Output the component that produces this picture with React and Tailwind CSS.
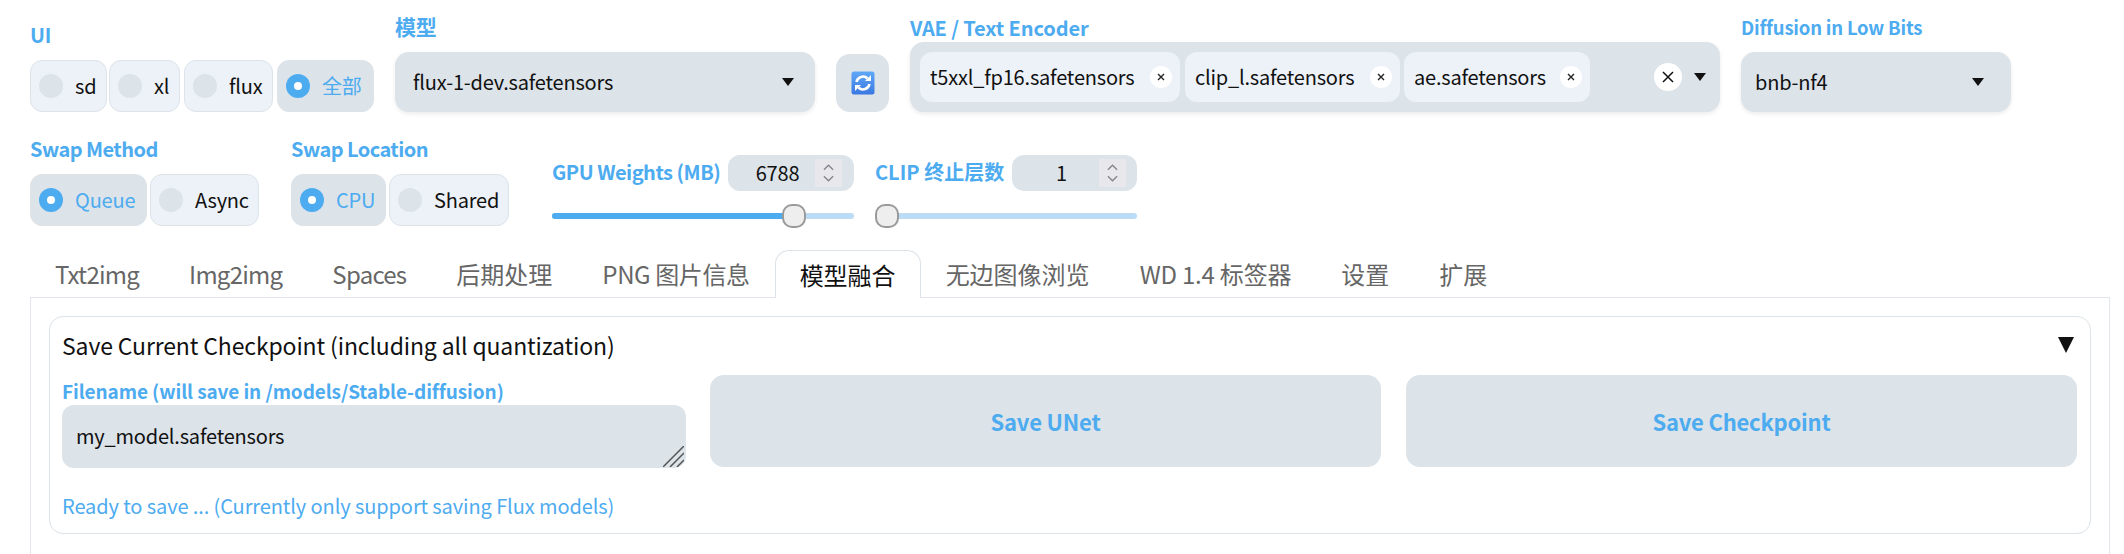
import React from 'react';

const font = "font-['Noto_Sans_CJK_SC','Noto_Sans',sans-serif]";

function Label({ children, className = '' }) {
  return <div className={`leading-[28px] font-semibold text-[#4dabf0] whitespace-nowrap ${className}`}>{children}</div>;
}

function Radio({ label, checked, className = '' }) {
  return (
    <div className={`h-full flex items-center gap-[12px] px-[8px] rounded-[12px] border ${checked ? 'bg-[#dce3e9] border-[#dce3e9] text-[#4dabf0]' : 'bg-[#edf2f8] border-[#dce3e9] text-[#111]'} ${className}`}>
      {checked ? (
        <span className="w-[24px] h-[24px] rounded-full bg-[#4dabf0] flex items-center justify-center shrink-0">
          <span className="w-[8px] h-[8px] rounded-full bg-white" />
        </span>
      ) : (
        <span className="w-[24px] h-[24px] rounded-full bg-[#dce3e9] shrink-0" />
      )}
      <span className="text-[20px] leading-none whitespace-nowrap">{label}</span>
    </div>
  );
}

function Arrow({ className = '' }) {
  return (
    <svg viewBox="0 0 12 8" className={`w-[12px] h-[8px] fill-[#111] ${className}`}>
      <path d="M0 0h12L6 8z" />
    </svg>
  );
}

function Select({ value, className = '' }) {
  return (
    <div className={`h-[60px] flex items-center justify-between rounded-[14px] bg-[#dce3e9] shadow-[0_2px_4px_rgba(0,0,0,0.08)] text-[20px] text-[#111] ${className}`}>
      <span>{value}</span>
      <Arrow />
    </div>
  );
}

function Chip({ label, className = '' }) {
  return (
    <div className={`h-[50px] flex items-center justify-between rounded-[12px] bg-[#edf2f8] pl-[10px] pr-[8px] text-[20px] text-[#111] ${className}`}>
      <span>{label}</span>
      <span className="w-[22px] h-[22px] rounded-full bg-white flex items-center justify-center">
        <svg viewBox="0 0 10 10" className="w-[10px] h-[10px] stroke-[#222] stroke-[1.4]"><path d="M2 2l6 6M8 2l-6 6" /></svg>
      </span>
    </div>
  );
}

function NumberBox({ value, className = '' }) {
  return (
    <div className={`h-[36px] rounded-[12px] bg-[#dce3e9] flex items-center pl-[12px] ${className}`}>
      <span className="w-[75px] text-center text-[20px] text-[#111]">{value}</span>
      <span className="w-[27px] h-[28px] bg-[#e8e8ec] flex flex-col items-center justify-center gap-[4px]">
        <svg viewBox="0 0 12 7" className="w-[11px] h-[7px] fill-none stroke-[#85858f] stroke-[1.5]"><path d="M1 6l5-5 5 5" /></svg>
        <svg viewBox="0 0 12 7" className="w-[11px] h-[7px] fill-none stroke-[#85858f] stroke-[1.5]"><path d="M1 1l5 5 5-5" /></svg>
      </span>
    </div>
  );
}

function Slider({ percent }) {
  const left = `calc((100% - 24px) * ${percent / 100})`;
  return (
    <div className="relative h-[24px] flex items-center">
      <div className="w-full h-[6px] rounded-full bg-[#bcdcf6] overflow-hidden">
        <div className="h-full bg-[#4dabf0]" style={{ width: `calc((100% - 24px) * ${percent / 100} + 12px)` }} />
      </div>
      <span className="absolute top-0 w-[24px] h-[24px] rounded-[10px] bg-[#eeeeee] border-2 border-[#9a9a9a]" style={{ left }} />
    </div>
  );
}

function Tab({ label, spacing, active }) {
  if (active) {
    return (
      <div className={`h-[48px] mb-[-1px] px-[24px] flex items-center text-[24px] text-[#111] bg-white border border-b-0 border-[#dce3e9] rounded-t-[14px] relative z-10 ${spacing}`}>
        {label}
      </div>
    );
  }
  return <div className={`h-[47px] px-[25px] flex items-center text-[24px] text-[#666] ${spacing}`}>{label}</div>;
}

const tabs = [
  { label: 'Txt2img', spacing: 'tracking-[-0.75px]' },
  { label: 'Img2img', spacing: 'tracking-[-0.75px]' },
  { label: 'Spaces', spacing: 'tracking-[-0.75px]' },
  { label: '后期处理', spacing: 'tracking-normal' },
  { label: 'PNG 图片信息', spacing: 'tracking-[-0.4px]' },
  { label: '模型融合', spacing: 'tracking-normal', active: true },
  { label: '无边图像浏览', spacing: 'tracking-normal' },
  { label: 'WD 1.4 标签器', spacing: 'tracking-[-0.2px]' },
  { label: '设置', spacing: 'tracking-normal' },
  { label: '扩展', spacing: 'tracking-normal' },
];

export default function App() {
  return (
    <div className={`w-[2124px] h-[554px] overflow-hidden bg-white tracking-[-0.2px] ${font}`}>
      <div className="flex items-end pl-[30px] pt-[12px]">
        <div className="w-[344px]">
          <Label className="mb-[11px] text-[20px]">UI</Label>
          <div className="flex gap-[2px] h-[52px]">
            <Radio label="sd" className="w-[77px]" />
            <Radio label="xl" className="w-[71px]" />
            <Radio label="flux" className="w-[89px] ml-[2px]" />
            <Radio label="全部" checked className="w-[97px] ml-[2px]" />
          </div>
        </div>
        <div className="w-[420px] ml-[21px]">
          <Label className="mb-[12px] text-[21px]">模型</Label>
          <Select value="flux-1-dev.safetensors" className="pl-[18px] pr-[21px]" />
        </div>
        <div className="w-[53px] h-[58px] ml-[21px] rounded-[14px] bg-[#dce3e9] flex items-center justify-center">
          <svg viewBox="0 0 24 24" className="w-[24px] h-[24px]">
            <defs>
              <linearGradient id="refreshBg" x1="0" y1="0" x2="0" y2="1">
                <stop offset="0" stopColor="#5fa8f7" />
                <stop offset="1" stopColor="#3a78e2" />
              </linearGradient>
            </defs>
            <rect x="0.5" y="0.5" width="23" height="23" rx="2.5" fill="url(#refreshBg)" />
            <path d="M5.5 11a6.5 6.5 0 0 1 11-3.5" fill="none" stroke="#fff" strokeWidth="2.6" />
            <path d="M14 10h6V4z" fill="#fff" />
            <path d="M18.5 13a6.5 6.5 0 0 1-11 3.5" fill="none" stroke="#fff" strokeWidth="2.6" />
            <path d="M10 14H4v6z" fill="#fff" />
          </svg>
        </div>
        <div className="w-[810px] ml-[21px]">
          <Label className="text-[20px] tracking-[-0.1px]">VAE / Text Encoder</Label>
          <div className="h-[70px] rounded-[14px] bg-[#dce3e9] shadow-[0_2px_4px_rgba(0,0,0,0.08)] flex items-center pl-[10px] pr-[14px]">
            <Chip label="t5xxl_fp16.safetensors" className="w-[260px]" />
            <Chip label="clip_l.safetensors" className="w-[215px] ml-[5px]" />
            <Chip label="ae.safetensors" className="w-[186px] ml-[4px]" />
            <span className="ml-auto w-[28px] h-[28px] rounded-full bg-white flex items-center justify-center">
              <svg viewBox="0 0 14 14" className="w-[14px] h-[14px] stroke-[#111] stroke-[1.5]"><path d="M2 2l10 10M12 2L2 12" /></svg>
            </span>
            <Arrow className="ml-[12px]" />
          </div>
        </div>
        <div className="w-[270px] ml-[21px]">
          <Label className="mb-[11px] text-[18.5px]">Diffusion in Low Bits</Label>
          <Select value="bnb-nf4" className="pl-[14px] pr-[27px]" />
        </div>
      </div>

      <div className="flex items-start pl-[30px] mt-[23px]">
        <div className="w-[261px]">
          <Label className="mb-[11px] text-[20px] tracking-[-0.55px]">Swap Method</Label>
          <div className="flex gap-[2px] h-[52px]">
            <Radio label="Queue" checked className="w-[117px]" />
            <Radio label="Async" className="w-[109px] ml-[1px]" />
          </div>
        </div>
        <div className="w-[261px]">
          <Label className="mb-[11px] text-[20px] tracking-[-0.55px]">Swap Location</Label>
          <div className="flex gap-[2px] h-[52px]">
            <Radio label="CPU" checked className="w-[95px]" />
            <Radio label="Shared" className="w-[120px] ml-[1px]" />
          </div>
        </div>
        <div className="w-[302px] mt-[20px]">
          <div className="flex items-center justify-between">
            <Label className="text-[20px] tracking-[-0.5px] mb-[3px]">GPU Weights (MB)</Label>
            <NumberBox value="6788" className="w-[126px]" />
          </div>
          <div className="mt-[13px]"><Slider percent={82.7} /></div>
        </div>
        <div className="w-[262px] ml-[21px] mt-[20px]">
          <div className="flex items-center justify-between">
            <Label className="text-[20px] tracking-normal mb-[3px]">CLIP 终止层数</Label>
            <NumberBox value="1" className="w-[125px]" />
          </div>
          <div className="mt-[13px]"><Slider percent={0} /></div>
        </div>
      </div>

      <div className="flex items-end pl-[30px] mt-[22px]">
        {tabs.map((t) => (
          <Tab key={t.label} label={t.label} spacing={t.spacing} active={t.active} />
        ))}
      </div>

      <div className="ml-[30px] mr-[14px] h-[300px] border border-[#e3e7ec] pl-[18px] pr-[18px] pt-[18px]">
        <div className="h-[218px] rounded-[14px] border border-[#dce3e9] pl-[12px] pr-[11px]">
          <div className="flex items-center justify-between h-[58px] pb-[2px]">
            <span className="text-[23px] tracking-[-0.13px] text-[#111]">Save Current Checkpoint (including all quantization)</span>
            <svg viewBox="0 0 16 16" className="w-[16px] h-[16px] fill-[#111] mr-[5px]"><path d="M0 0h16L8 16z" /></svg>
          </div>
          <div className="flex gap-[24px]">
            <div className="w-[624px]">
              <Label className="text-[19px] leading-[27px] mt-[2px] tracking-[-0.1px]">Filename (will save in /models/Stable-diffusion)</Label>
              <div className="relative h-[63px] rounded-[12px] bg-[#dce3e9] flex items-center px-[14px] pb-[2px] text-[20px] text-[#111]">
                my_model.safetensors
                <svg viewBox="0 0 21 21" className="absolute right-[2px] bottom-[1px] w-[21px] h-[21px] stroke-[#555] stroke-[1.5]">
                  <path d="M0 21L21 0M7 21L21 7M14 21l7-7" />
                </svg>
              </div>
            </div>
            <div className="w-[671px] h-[92px] rounded-[14px] bg-[#dce3e9] flex items-center justify-center text-[22px] font-semibold text-[#4dabf0]">Save UNet</div>
            <div className="w-[671px] h-[92px] ml-[1px] rounded-[14px] bg-[#dce3e9] flex items-center justify-center text-[22px] font-semibold text-[#4dabf0]">Save Checkpoint</div>
          </div>
          <div className="mt-[24px] text-[20px] leading-[28px] tracking-[-0.1px] text-[#4dabf0]">Ready to save ... (Currently only support saving Flux models)</div>
        </div>
      </div>
    </div>
  );
}
